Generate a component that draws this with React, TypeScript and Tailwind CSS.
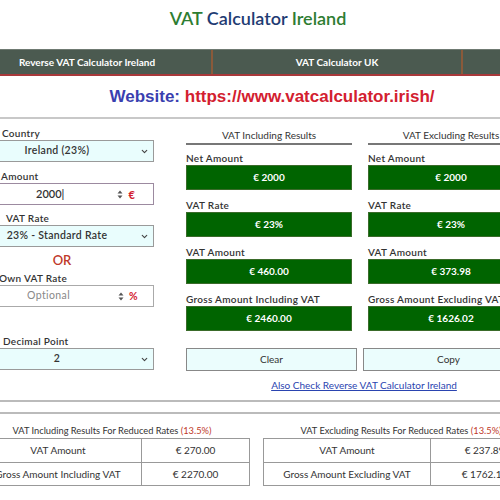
import { ChevronDown } from "lucide-react";

function Spin() {
  return (
    <svg width="6" height="9" viewBox="0 0 6 9" className="text-[#555]">
      <path d="M3 0.5 L5.5 3.5 H0.5 Z" fill="currentColor" />
      <path d="M3 8.5 L5.5 5.5 H0.5 Z" fill="currentColor" />
    </svg>
  );
}

function Label({ children, className = "" }: { children: React.ReactNode; className?: string }) {
  return (
    <div className={`h-[14px] leading-[14px] text-[10px] font-semibold tracking-[0.3px] text-[#333] ${className}`}>
      {children}
    </div>
  );
}

function Select({ value }: { value: string }) {
  return (
    <div className="relative h-[22px] border border-[#9a9a9a] bg-[#e9fdfd] flex items-center justify-center text-[10.5px] font-semibold tracking-[0.3px] text-[#333]">
      <span>{value}</span>
      <ChevronDown size={9} strokeWidth={3} className="absolute right-[4px] top-[6px] text-[#444]" />
    </div>
  );
}

function ResultBox({ label, value, first }: { label: string; value: string; first?: boolean }) {
  return (
    <div>
      <Label className={first ? "mt-[6px]" : "mt-[8px]"}>{label}</Label>
      <div className="h-[25px] bg-[#006400] border border-[#3a6b2a] flex items-center justify-center text-[10px] font-bold text-white">
        {value}
      </div>
    </div>
  );
}

function Column({ title, rows }: { title: string; rows: [string, string][] }) {
  return (
    <div className="w-[166px]">
      <div className="h-[18px] leading-[16px] text-center text-[10px] text-[#333] border-b-2 border-[#777] mt-[8px]">
        {title}
      </div>
      {rows.map(([l, v], i) => (
        <ResultBox key={l} label={l} value={v} first={i === 0} />
      ))}
    </div>
  );
}

function Table({ title, rows }: { title: string; rows: [string, string][] }) {
  return (
    <div className="w-[276px]">
      <div className="h-[14px] leading-[14px] text-center text-[9.3px] text-[#333] mt-[10px]">
        {title} <span className="text-[#c0392b]">(13.5%)</span>
      </div>
      <div className="border border-[#999]">
        {rows.map(([l, v], i) => (
          <div key={l} className={`flex h-[23px] text-[10px] text-[#333] ${i > 0 ? "border-t border-[#999]" : ""}`}>
            <div className="w-[167px] border-r border-[#999] flex items-center justify-center">{l}</div>
            <div className="flex-1 flex items-center justify-center">{v}</div>
          </div>
        ))}
      </div>
    </div>
  );
}

export default function App() {
  return (
    <div className="w-[500px] h-[500px] overflow-hidden bg-white font-['Lato','Open_Sans',sans-serif] text-[#333]">
      {/* Titre */}
      <h1 className="h-[49px] pt-[6px] pl-[16px] text-center text-[18px] font-semibold leading-[24px]">
        <span className="text-[#2e7d32]">VAT</span> <span className="text-[#1f3c73]">Calculator</span>{" "}
        <span className="text-[#2e7d32]">Ireland</span>
      </h1>

      {/* Menu */}
      <div className="flex w-[750px] ml-[-37px] h-[27px] bg-[#4b5a50] border-t border-[#6f7a72] border-b-2 border-b-[#a8383a]">
        <div className="w-[250px] border-r-2 border-[#8a5a3a] flex items-center justify-center text-[10px] font-bold text-white">
          Reverse VAT Calculator Ireland
        </div>
        <div className="w-[250px] border-r-2 border-[#8a5a3a] flex items-center justify-center text-[10px] font-bold text-white">
          VAT Calculator UK
        </div>
        <div className="w-[250px]"></div>
      </div>

      <div className="h-[41px] flex items-center justify-center pl-[44px] font-['Liberation_Sans',Arial,sans-serif] font-bold text-[17px]">
        <span className="text-[#3a3fb0]">Website:</span>&nbsp;<span className="text-[#d3202f]">https://www.vatcalculator.irish/</span>
      </div>
      <div className="h-[2px] bg-[#c8c8c8]"></div>

      {/* Formulaire + resultats */}
      <div className="flex ml-[-40px] w-[580px]">
        <div className="w-[194px] pt-[7px]">
          <Label className="pl-[42px]">Country</Label>
          <Select value="Ireland (23%)" />

          <Label className="pl-[41px] mt-[7px]">Amount</Label>
          <div className="relative h-[22px] border border-[#9c8aa0] bg-white flex items-center text-[11px] font-semibold text-[#333]">
            <span className="pl-[75px]">2000|</span>
            <div className="absolute right-[30px] top-[6px]"><Spin /></div>
            <span className="absolute right-[18px] top-[3px] text-[#d3202f] font-bold">€</span>
          </div>

          <Label className="pl-[46px] mt-[6px]">VAT Rate</Label>
          <Select value="23% - Standard Rate" />

          <div className="h-[24px] pt-[4px] flex items-center justify-center pl-[10px] text-[13px] font-semibold text-[#c0392b]">OR</div>

          <Label className="pl-[39px]">Own VAT Rate</Label>
          <div className="relative h-[22px] border border-[#aaa] bg-white flex items-center text-[10.5px] tracking-[0.4px] text-[#888]">
            <span className="pl-[66px]">Optional</span>
            <div className="absolute right-[29px] top-[6px]"><Spin /></div>
            <span className="absolute right-[15px] top-[3px] text-[#d3202f] font-bold">%</span>
          </div>

          <Label className="pl-[43px] mt-[27px]">Decimal Point</Label>
          <Select value="2" />
        </div>

        <div className="ml-[32px] flex-1">
          <div className="flex gap-[16px]">
            <Column
              title="VAT Including Results"
              rows={[
                ["Net Amount", "€ 2000"],
                ["VAT Rate", "€ 23%"],
                ["VAT Amount", "€ 460.00"],
                ["Gross Amount Including VAT", "€ 2460.00"],
              ]}
            />
            <Column
              title="VAT Excluding Results"
              rows={[
                ["Net Amount", "€ 2000"],
                ["VAT Rate", "€ 23%"],
                ["VAT Amount", "€ 373.98"],
                ["Gross Amount Excluding VAT", "€ 1626.02"],
              ]}
            />
          </div>
          <div className="flex gap-[6px] mt-[17px]">
            <button className="w-[171px] h-[23px] border border-[#888] bg-[#ebfdfd] text-[10px] text-[#333]">Clear</button>
            <button className="w-[171px] h-[23px] border border-[#888] bg-[#ebfdfd] text-[10px] text-[#333]">Copy</button>
          </div>
          <div className="h-[29px] flex items-center justify-center pl-[14px] pr-[12px]">
            <a href="#" className="text-[10px] text-[#2a44b0] underline">Also Check Reverse VAT Calculator Ireland</a>
          </div>
        </div>
      </div>

      <div className="h-[2px] bg-[#bbb]"></div>
      <div className="h-[10px]"></div>
      <div className="h-[2px] bg-[#bbb]"></div>

      {/* Tableaux taux reduits */}
      <div className="flex gap-[13px] ml-[-26px] w-[600px]">
        <Table
          title="VAT Including Results For Reduced Rates"
          rows={[
            ["VAT Amount", "€ 270.00"],
            ["Gross Amount Including VAT", "€ 2270.00"],
          ]}
        />
        <Table
          title="VAT Excluding Results For Reduced Rates"
          rows={[
            ["VAT Amount", "€ 237.89"],
            ["Gross Amount Excluding VAT", "€ 1762.11"],
          ]}
        />
      </div>
    </div>
  );
}
